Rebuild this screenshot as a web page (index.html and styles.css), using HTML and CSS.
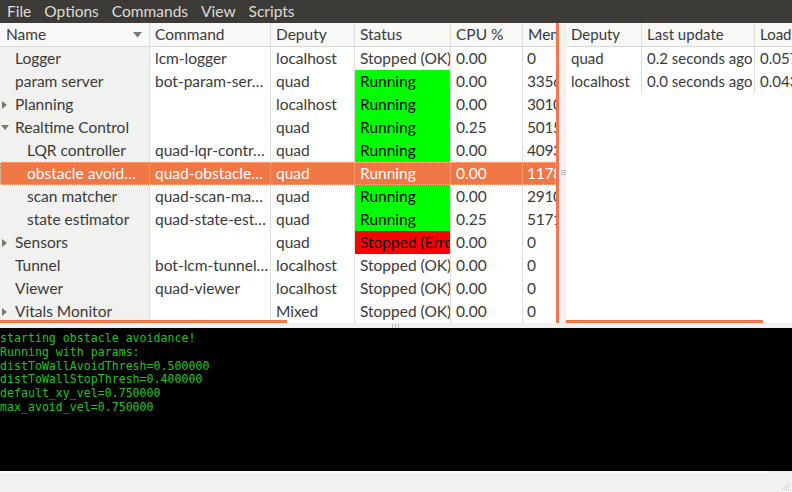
FILE: index.html
```html
<!DOCTYPE html>
<html>
<head>
<meta charset="utf-8">
<link rel="stylesheet" href="styles.css">
</head>
<body>
<div class="menubar">
  <span class="menu">File</span>
  <span class="menu">Options</span>
  <span class="menu">Commands</span>
  <span class="menu">View</span>
  <span class="menu">Scripts</span>
</div>
<div class="main">
  <div class="left">
    <div class="ptable">
      <div class="prow head">
        <div class="c name">Name<svg class="sort" width="9" height="6" viewBox="0 0 9 6"><path d="M0 0 H9 L4.5 5.5 Z" fill="#7a7a7a"/></svg></div>
        <div class="c">Command</div>
        <div class="c">Deputy</div>
        <div class="c">Status</div>
        <div class="c">CPU %</div>
        <div class="c">Memory</div>
      </div>
      <div class="prow">
        <div class="c name l1">Logger</div>
        <div class="c">lcm-logger</div>
        <div class="c">localhost</div>
        <div class="c">Stopped (OK)</div>
        <div class="c">0.00</div>
        <div class="c num">0</div>
      </div>
      <div class="prow">
        <div class="c name l1">param server</div>
        <div class="c">bot-param-ser…</div>
        <div class="c">quad</div>
        <div class="c run">Running</div>
        <div class="c">0.00</div>
        <div class="c num">33564</div>
      </div>
      <div class="prow">
        <div class="c name l1"><svg class="exp" width="6" height="8" viewBox="0 0 6 8"><path d="M0 0 L5 4 L0 8 Z" fill="#777"/></svg>Planning</div>
        <div class="c"></div>
        <div class="c">localhost</div>
        <div class="c run">Running</div>
        <div class="c">0.00</div>
        <div class="c num">30104</div>
      </div>
      <div class="prow">
        <div class="c name l1"><svg class="exp down" width="8" height="6" viewBox="0 0 8 6"><path d="M0 0 H8 L4 5 Z" fill="#777"/></svg>Realtime Control</div>
        <div class="c"></div>
        <div class="c">quad</div>
        <div class="c run">Running</div>
        <div class="c">0.25</div>
        <div class="c num">50156</div>
      </div>
      <div class="prow">
        <div class="c name l2">LQR controller</div>
        <div class="c">quad-lqr-contr…</div>
        <div class="c">quad</div>
        <div class="c run">Running</div>
        <div class="c">0.00</div>
        <div class="c num">40932</div>
      </div>
      <div class="prow sel">
        <div class="c name l2">obstacle avoid…</div>
        <div class="c">quad-obstacle…</div>
        <div class="c">quad</div>
        <div class="c">Running</div>
        <div class="c">0.00</div>
        <div class="c num">11784</div>
      </div>
      <div class="prow">
        <div class="c name l2">scan matcher</div>
        <div class="c">quad-scan-ma…</div>
        <div class="c">quad</div>
        <div class="c run">Running</div>
        <div class="c">0.00</div>
        <div class="c num">29108</div>
      </div>
      <div class="prow">
        <div class="c name l2">state estimator</div>
        <div class="c">quad-state-est…</div>
        <div class="c">quad</div>
        <div class="c run">Running</div>
        <div class="c">0.25</div>
        <div class="c num">51712</div>
      </div>
      <div class="prow">
        <div class="c name l1"><svg class="exp" width="6" height="8" viewBox="0 0 6 8"><path d="M0 0 L5 4 L0 8 Z" fill="#777"/></svg>Sensors</div>
        <div class="c"></div>
        <div class="c">quad</div>
        <div class="c err">Stopped (Error)</div>
        <div class="c">0.00</div>
        <div class="c num">0</div>
      </div>
      <div class="prow">
        <div class="c name l1">Tunnel</div>
        <div class="c">bot-lcm-tunnel…</div>
        <div class="c">localhost</div>
        <div class="c">Stopped (OK)</div>
        <div class="c">0.00</div>
        <div class="c num">0</div>
      </div>
      <div class="prow">
        <div class="c name l1">Viewer</div>
        <div class="c">quad-viewer</div>
        <div class="c">localhost</div>
        <div class="c">Stopped (OK)</div>
        <div class="c">0.00</div>
        <div class="c num">0</div>
      </div>
      <div class="prow">
        <div class="c name l1"><svg class="exp" width="6" height="8" viewBox="0 0 6 8"><path d="M0 0 L5 4 L0 8 Z" fill="#777"/></svg>Vitals Monitor</div>
        <div class="c"></div>
        <div class="c">Mixed</div>
        <div class="c">Stopped (OK)</div>
        <div class="c">0.00</div>
        <div class="c num">0</div>
      </div>
    </div>
    <div class="vscroll"></div>
    <div class="hscroll left-h"></div>
  </div>
  <div class="vhandle"><svg width="5" height="5" viewBox="0 0 5 5"><path d="M0 0.5 H5 M0 2.5 H5 M0 4.5 H5" stroke="#b5b5b5" stroke-width="1"/></svg></div>
  <div class="right">
    <div class="dtable">
      <div class="drow head">
        <div class="c">Deputy</div>
        <div class="c">Last update</div>
        <div class="c">Load</div>
      </div>
      <div class="drow">
        <div class="c">quad</div>
        <div class="c">0.2 seconds ago</div>
        <div class="c">0.057</div>
      </div>
      <div class="drow">
        <div class="c">localhost</div>
        <div class="c">0.0 seconds ago</div>
        <div class="c">0.043</div>
      </div>
    </div>
    <div class="hscroll right-h"></div>
  </div>
</div>
<div class="hhandle"><svg width="7" height="4" viewBox="0 0 7 4"><path d="M0.5 0 V4 M3.5 0 V4 M6.5 0 V4" stroke="#b5b5b5" stroke-width="1"/></svg></div>
<div class="console">
  <div class="line">starting obstacle avoidance!</div>
  <div class="line">Running with params:</div>
  <div class="line">distToWallAvoidThresh=0.500000</div>
  <div class="line">distToWallStopThresh=0.400000</div>
  <div class="line">default_xy_vel=0.750000</div>
  <div class="line">max_avoid_vel=0.750000</div>
</div>
<div class="statusbar">
  <svg class="grip" width="10" height="10" viewBox="0 0 10 10"><g fill="#c4c4c4"><rect x="8" y="2" width="1" height="1"/><rect x="6" y="4" width="1" height="1"/><rect x="8" y="4" width="1" height="1"/><rect x="4" y="6" width="1" height="1"/><rect x="6" y="6" width="1" height="1"/><rect x="8" y="6" width="1" height="1"/><rect x="2" y="8" width="1" height="1"/><rect x="4" y="8" width="1" height="1"/><rect x="6" y="8" width="1" height="1"/><rect x="8" y="8" width="1" height="1"/></g></svg>
</div>
</body>
</html>
```
FILE: styles.css
```css
html, body {
  margin: 0;
  padding: 0;
}
body {
  width: 792px;
  height: 492px;
  overflow: hidden;
  background: #f2f1f0;
  font-family: Lato, "Noto Sans", sans-serif;
  font-size: 15.5px;
  color: #3a3a3a;
}
.menubar {
  height: 23px;
  background: #3c3b37;
  color: #dfdbd2;
  display: flex;
  align-items: center;
  padding-left: 7px;
}
.menu {
  margin-right: 13px;
  line-height: 23px;
}
.main {
  display: flex;
  height: 300px;
}
.left {
  width: 560px;
  position: relative;
  background: #ffffff;
  overflow: hidden;
}
.ptable {
  width: 556px;
  overflow: hidden;
}
.prow {
  display: grid;
  grid-template-columns: 149px 121px 84px 96px 72px 80px;
  height: 23px;
}
.prow.head, .drow.head {
  height: 24px;
  background: #f8f8f7;
  border-bottom: 1px solid #d9d8d6;
  box-sizing: border-box;
}
.c {
  box-sizing: border-box;
  border-left: 1px solid #dcdcdc;
  padding-left: 5px;
  white-space: nowrap;
  overflow: hidden;
  display: flex;
  align-items: center;
  line-height: 23px;
}
.c.num {
  padding-left: 4px;
  letter-spacing: -0.3px;
}
.c.name {
  border-left: none;
  background: #f1f1f0;
  position: relative;
}
.head .c.name {
  background: transparent;
  padding-left: 6px;
}
.sort {
  position: absolute;
  left: 133px;
  top: 9px;
}
.l1 { padding-left: 15px; }
.l2 { padding-left: 27px; }
.exp {
  position: absolute;
  left: 2px;
  top: 8px;
}
.exp.down {
  left: 1px;
  top: 9px;
}
.run {
  background: #00ff00;
  color: #000;
}
.err {
  background: #ff0000;
  color: #000;
}
.prow.sel {
  background: #f07746;
  color: #ffffff;
  outline: 1px dotted rgba(255, 230, 210, 0.8);
  outline-offset: -1px;
}
.prow.sel .c {
  border-left-color: rgba(255, 255, 255, 0.2);
}
.prow.sel .c.name {
  background: transparent;
}
.vscroll {
  position: absolute;
  left: 556px;
  top: 0;
  width: 3px;
  height: 300px;
  background: #f07746;
}
.hscroll {
  position: absolute;
  top: 297px;
  height: 3px;
  background: #f07746;
}
.left-h {
  left: 0;
  width: 287px;
}
.right-h {
  left: 0;
  width: 197px;
}
.vhandle {
  width: 6px;
  background: #f2f1f0;
  display: flex;
  align-items: center;
  justify-content: center;
}
.vhandle svg {
  margin-top: -2px;
}
.right {
  flex: 1;
  position: relative;
  background: #ffffff;
  overflow: hidden;
}
.dtable {
  width: 240px;
  font-size: 15px;
}
.drow {
  display: grid;
  grid-template-columns: 75px 113px 52px;
  height: 23px;
}
.drow .c:first-child {
  border-left: none;
}
.hhandle {
  height: 5px;
  background: #f2f1f0;
  display: flex;
  align-items: center;
  padding-left: 392px;
}
.console {
  height: 143px;
  background: #000000;
  color: #1ec41e;
  font-family: "DejaVu Sans Mono", monospace;
  font-size: 11.6px;
  line-height: 13.8px;
  padding-top: 4px;
  box-sizing: border-box;
}
.line {
  white-space: pre;
}
.statusbar {
  height: 21px;
  border-top: 2px solid #fbfbfa;
  box-sizing: border-box;
  position: relative;
  background: #f2f1f0;
  margin-right: 24px;
}
.grip {
  position: absolute;
  right: -22px;
  bottom: 1px;
}
```
